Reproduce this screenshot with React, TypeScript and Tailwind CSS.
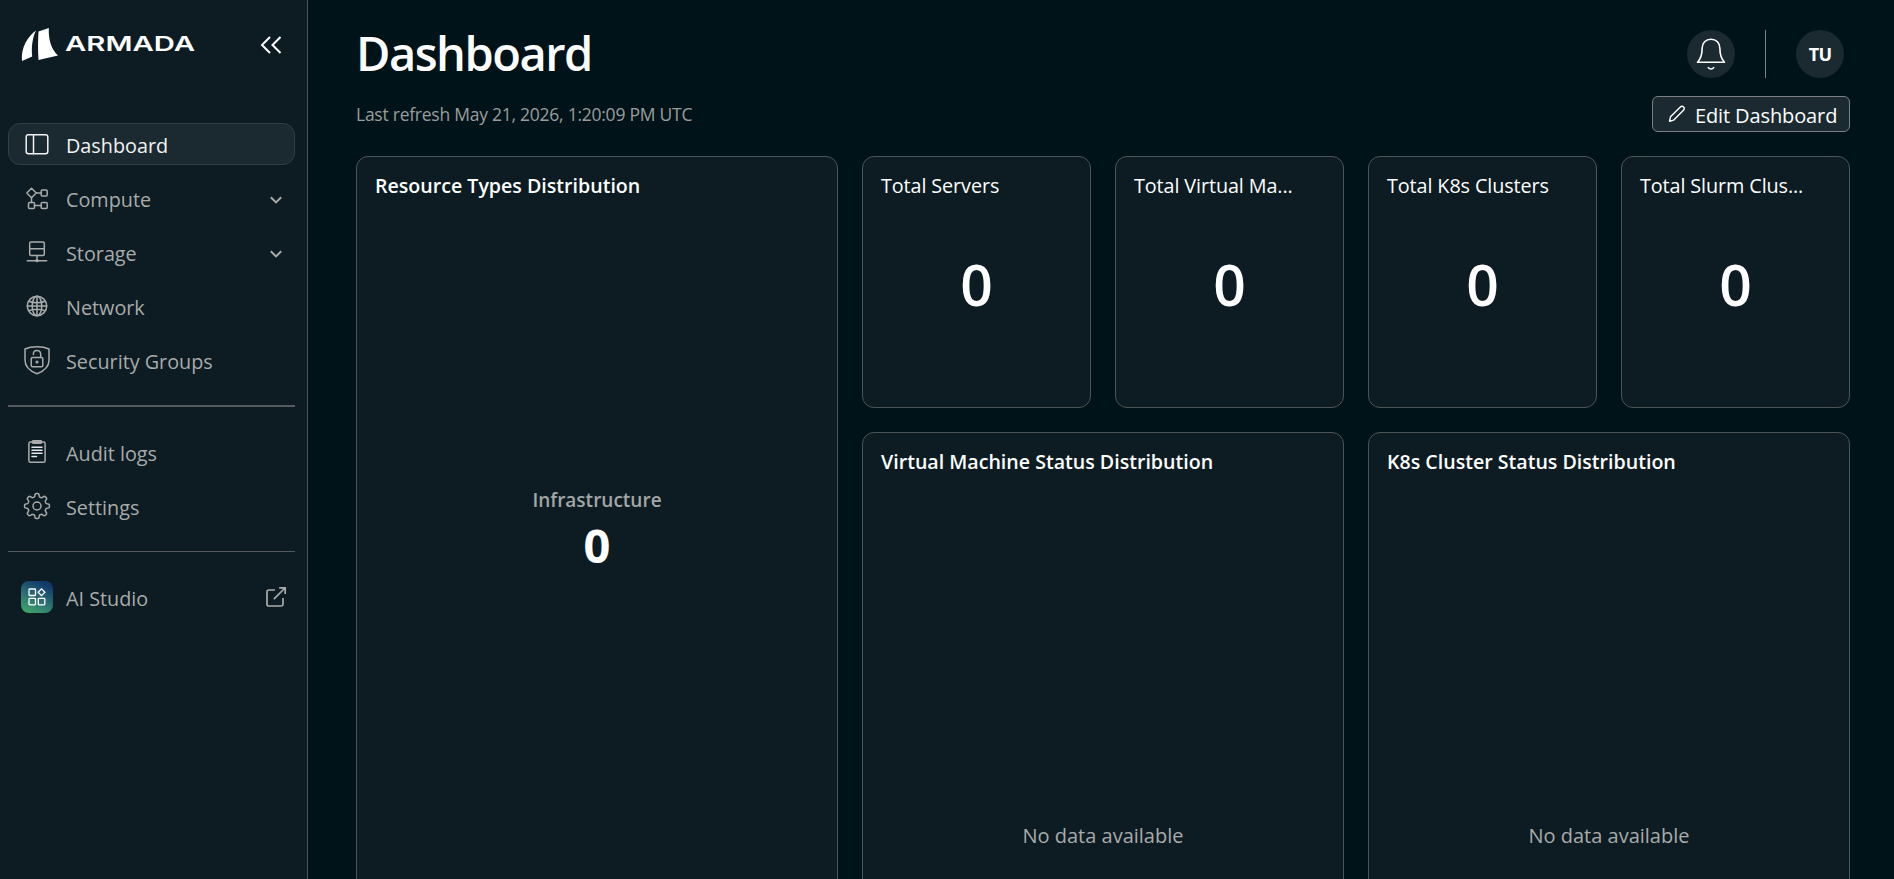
import type { ReactNode } from "react";

function Logo() {
  return (
    <svg width="176" height="36" viewBox="20 26 176 36" fill="#fff">
      <path d="M36 30.6C28.2 36 20.6 47.5 22 61l10.2-4.6C31.2 47 32.4 38 36 30.6Z" />
      <path d="M38.5 31.6 48.8 28c-.4 11.6 2.2 20.8 9.2 27.6L38.5 60c-.6-9-.6-19 0-28.4Z" />
      <text
        x="65"
        y="51"
        fontSize="20.5"
        fontWeight="600"
        textLength="130"
        lengthAdjust="spacingAndGlyphs"
        className="font-['Inter',sans-serif]"
      >
        ARMADA
      </text>
    </svg>
  );
}

function Icon({ children, size = 28 }: { children: ReactNode; size?: number }) {
  return (
    <svg
      width={size}
      height={size}
      viewBox={`0 0 ${size} ${size}`}
      fill="none"
      stroke="currentColor"
      strokeWidth="1.5"
      strokeLinecap="round"
      strokeLinejoin="round"
    >
      {children}
    </svg>
  );
}

const DashboardIcon = () => (
  <Icon>
    <rect x="3.2" y="4.7" width="21.6" height="19" rx="2.2" />
    <path d="M10.5 4.7v19" />
  </Icon>
);

const ComputeIcon = () => (
  <Icon>
    <path d="M8.5 4.2 13.2 9l-4.7 4.7L3.8 9z" />
    <rect x="18.2" y="6" width="6" height="6" rx="1" />
    <rect x="5.5" y="18.5" width="6" height="6" rx="1" />
    <rect x="18.2" y="18.5" width="6" height="6" rx="1" />
    <path d="M13.2 9h5M8.5 13.7v4.8M11.5 21.5h6.7" />
  </Icon>
);

const StorageIcon = () => (
  <Icon>
    <rect x="6.7" y="4" width="14.6" height="13.5" rx="1.2" />
    <path d="M6.700 10.800h14.600M14 17.500v4M4.300 22.700h19.400" />
    <circle cx="14" cy="22.7" r=".9" fill="currentColor" />
  </Icon>
);

const NetworkIcon = () => (
  <Icon>
    <circle cx="14" cy="14" r="9.7" />
    <ellipse cx="14" cy="14" rx="4.8" ry="9.7" />
    <path d="M14 4.300v19.400M4.300 14h19.400M6 9.200c4.500 2 11.500 2 16 0M6 18.800c4.500-2 11.500-2 16 0" />
  </Icon>
);

const SecurityIcon = () => (
  <Icon size={30}>
    <path d="M15 1.7c4.5 0 8.500.6 12 2.300v11.200c0 6.500-5 10.800-12 13.600C8 26 3 21.700 3 15.200V4c3.500-1.700 7.500-2.300 12-2.300Z" />
    <rect x="9.2" y="12.5" width="11.6" height="9.2" rx="1.3" />
    <path d="M11.300 9.500c0-2.300 1.500-4 3.700-4s3.700 1.700 3.700 4v3" />
    <circle cx="15" cy="17" r=".8" fill="currentColor" />
  </Icon>
);

const AuditIcon = () => (
  <Icon>
    <rect x="5.9" y="4" width="16.2" height="20.2" rx="1.5" />
    <rect x="9.3" y="2.8" width="9.4" height="2.5" rx="1" fill="currentColor" />
    <path d="M9 9.300h10M9 12.300h10M9 15.300h10M9 18.500h4.500" stroke="#e5e7e8" />
  </Icon>
);

// eight rounded teeth around the centre
const gearPoints = Array.from({ length: 160 }, (_, i) => {
  const a = (i / 160) * Math.PI * 2;
  const r = 10.9 + 1.6 * Math.tanh(2.2 * Math.cos(8 * a));
  return `${(14 + r * Math.sin(a)).toFixed(2)},${(14 - r * Math.cos(a)).toFixed(2)}`;
}).join(" ");

const SettingsIcon = () => (
  <Icon>
    <circle cx="14" cy="14" r="4" />
    <polygon points={gearPoints} />
  </Icon>
);

const StudioIcon = () => (
  <span className="flex size-8 items-center justify-center rounded-lg bg-[linear-gradient(25deg,#3fae68_0%,#2f7472_42%,#123a6b_85%)] text-white">
    <svg width="18" height="18" viewBox="0 0 18 18" fill="none" stroke="currentColor" strokeWidth="1.3">
      <rect x="1" y="1" width="6.5" height="6.5" rx=".8" />
      <rect x="1" y="10.3" width="6.5" height="6.5" rx=".8" />
      <rect x="10.3" y="10.3" width="6.5" height="6.5" rx=".8" />
      <path d="m13.500.9 3.400 3.400-3.400 3.400-3.400-3.400z" />
    </svg>
  </span>
);

const ChevronDown = () => (
  <svg width="14" height="10" viewBox="0 0 14 10" fill="none" stroke="currentColor" strokeWidth="2">
    <path d="m1.800 2.200 5.200 5.200 5.200-5.200" />
  </svg>
);

const ExternalLink = () => (
  <svg width="22" height="22" viewBox="0 0 22 22" fill="none" stroke="currentColor" strokeWidth="1.7">
    <path d="M10 4H3.800A1.800 1.800 0 0 0 2 5.800v12.400A1.800 1.800 0 0 0 3.800 20h12.400a1.800 1.800 0 0 0 1.800-1.800V12" />
    <path d="M14.200 1.900h6v6M20 2 8.800 13.200" />
  </svg>
);

interface NavItemProps {
  icon: ReactNode;
  label: string;
  active?: boolean;
  trailing?: ReactNode;
}

function NavItem({ icon, label, active, trailing }: NavItemProps) {
  return (
    <a
      className={
        active
          ? "flex h-[42px] items-center rounded-xl border border-[#333d42] bg-[#1b2a30] pl-[11px] text-[#f2f4f4]"
          : "flex h-[42px] items-center border border-transparent pl-[11px] text-[#a9abab]"
      }
    >
      <span className="flex w-[33px] justify-center">{icon}</span>
      <span className="ml-[13px] flex-1 pt-1 text-[19.8px]">{label}</span>
      {trailing}
    </a>
  );
}

function Sidebar() {
  return (
    <aside className="w-[308px] shrink-0 border-r border-[#4a5356] bg-[#0c1c22] pl-2 pr-3 pt-[26px]">
      <div className="flex h-9 items-center justify-between pl-3 pr-[13px]">
        <Logo />
        <svg className="mt-0.5" width="22" height="20" viewBox="0 0 22 20" fill="none" stroke="#fff" strokeWidth="2">
          <path d="m10 2-8 8 8 8M20.500 2l-8 8 8 8" />
        </svg>
      </div>

      <nav className="mt-[61px] flex flex-col gap-3">
        <NavItem icon={<DashboardIcon />} label="Dashboard" active />
        <NavItem
          icon={<ComputeIcon />}
          label="Compute"
          trailing={<span className="mr-[11px] mt-1"><ChevronDown /></span>}
        />
        <NavItem
          icon={<StorageIcon />}
          label="Storage"
          trailing={<span className="mr-[11px] mt-1"><ChevronDown /></span>}
        />
        <NavItem icon={<NetworkIcon />} label="Network" />
        <NavItem icon={<SecurityIcon />} label="Security Groups" />
      </nav>

      <div className="mt-6 h-0.5 bg-[#555a5d]" />

      <nav className="mt-6 flex flex-col gap-3">
        <NavItem icon={<AuditIcon />} label="Audit logs" />
        <NavItem icon={<SettingsIcon />} label="Settings" />
      </nav>

      <div className="mt-6 h-px bg-[#555a5d]" />

      <nav className="mt-6">
        <NavItem
          icon={<StudioIcon />}
          label="AI Studio"
          trailing={<span className="mr-[7px]"><ExternalLink /></span>}
        />
      </nav>
    </aside>
  );
}

function Header() {
  return (
    <header>
      <div className="flex h-12 items-center justify-between pr-1.5">
        <h1 className="-mt-[3px] text-[47px] leading-[48px] font-semibold tracking-[-1.5px]">Dashboard</h1>
        <div className="flex items-center">
          <button className="flex size-12 items-center justify-center rounded-full bg-[#1b2a30]">
            <svg width="32" height="36" viewBox="0 0 32 36" fill="none" stroke="#fff" strokeWidth="1.6" strokeLinecap="round">
              <path d="M16 3.200c-5.300 0-8.900 3.900-8.900 9.200 0 6.300-.7 9.600-4.600 13.900h27c-3.900-4.300-4.600-7.600-4.600-13.900 0-5.300-3.600-9.200-8.900-9.200Z" strokeLinejoin="round" />
              <path d="M13.300 31.600c1.300 1.900 4.100 1.900 5.400 0" />
            </svg>
          </button>
          <div className="ml-[30px] mr-[30px] h-12 w-px bg-[#7d8385]" />
          <div className="flex size-12 items-center justify-center rounded-full bg-[#1b2a30] text-[18px] font-bold tracking-[-0.8px]">
            TU
          </div>
        </div>
      </div>
      <div className="mt-[18px] flex h-9 items-center justify-between">
        <p className="pt-px text-[17.5px] tracking-[-0.25px] text-[#9a9d9e]">
          Last refresh May 21, 2026, 1:20:09 PM UTC
        </p>
        <button className="flex h-9 w-[198px] items-center rounded-md border border-[#7b8183] bg-[#1b2a30] pl-[15px]">
          <svg width="18" height="18" viewBox="0 0 18 18" fill="none" stroke="#fff" strokeWidth="1.4" strokeLinejoin="round">
            <path d="m1.500 16.200 1-4.400L12.600 1.800a1.900 1.900 0 0 1 2.700 0l.4.400a1.900 1.900 0 0 1 0 2.700L5.800 15.100z" />
          </svg>
          <span className="ml-[9px] pt-[3px] text-[20px] tracking-[-0.12px]">Edit Dashboard</span>
        </button>
      </div>
    </header>
  );
}

function Card({ title, className, titleClass, children }: {
  title: string;
  className: string;
  titleClass: string;
  children: ReactNode;
}) {
  return (
    <section className={`rounded-xl border border-[#4d5456] bg-[#0c1c22] px-[18px] pt-[15px] ${className}`}>
      <h2 className={`leading-7 ${titleClass}`}>{title}</h2>
      {children}
    </section>
  );
}

const totals = [
  { title: "Total Servers", value: 0 },
  { title: "Total Virtual Ma...", value: 0 },
  { title: "Total K8s Clusters", value: 0 },
  { title: "Total Slurm Clus...", value: 0 },
];

const statuses = ["Virtual Machine Status Distribution", "K8s Cluster Status Distribution"];

export default function App() {
  return (
    <div className="flex h-[879px] overflow-hidden bg-[#001318] font-['Open_Sans','Noto_Sans',sans-serif] text-white">
      <Sidebar />
      <main className="flex-1 pl-12 pr-11 pt-[30px]">
        <Header />
        <div className="mt-6 grid grid-cols-6 grid-rows-[252px_528px] gap-6">
          <Card title="Resource Types Distribution" className="col-span-2 row-span-2" titleClass="text-[19.6px] font-semibold">
            <div className="mt-[286px] text-center">
              <p className="text-[19px] leading-7 font-semibold text-[#a3a6a6]">Infrastructure</p>
              <p className="mt-[7px] text-[47px] leading-[48px] font-bold">0</p>
            </div>
          </Card>
          {totals.map((t) => (
            <Card key={t.title} title={t.title} className="" titleClass="text-[19.8px] tracking-[-0.1px] whitespace-nowrap">
              <p className="mt-14 text-center text-[57px] leading-[56px] font-semibold">{t.value}</p>
            </Card>
          ))}
          {statuses.map((s) => (
            <Card key={s} title={s} className="col-span-2" titleClass="text-[19.6px] font-semibold">
              <p className="mt-[346px] text-center text-[20px] leading-7 text-[#a9abab]">No data available</p>
            </Card>
          ))}
        </div>
      </main>
    </div>
  );
}
